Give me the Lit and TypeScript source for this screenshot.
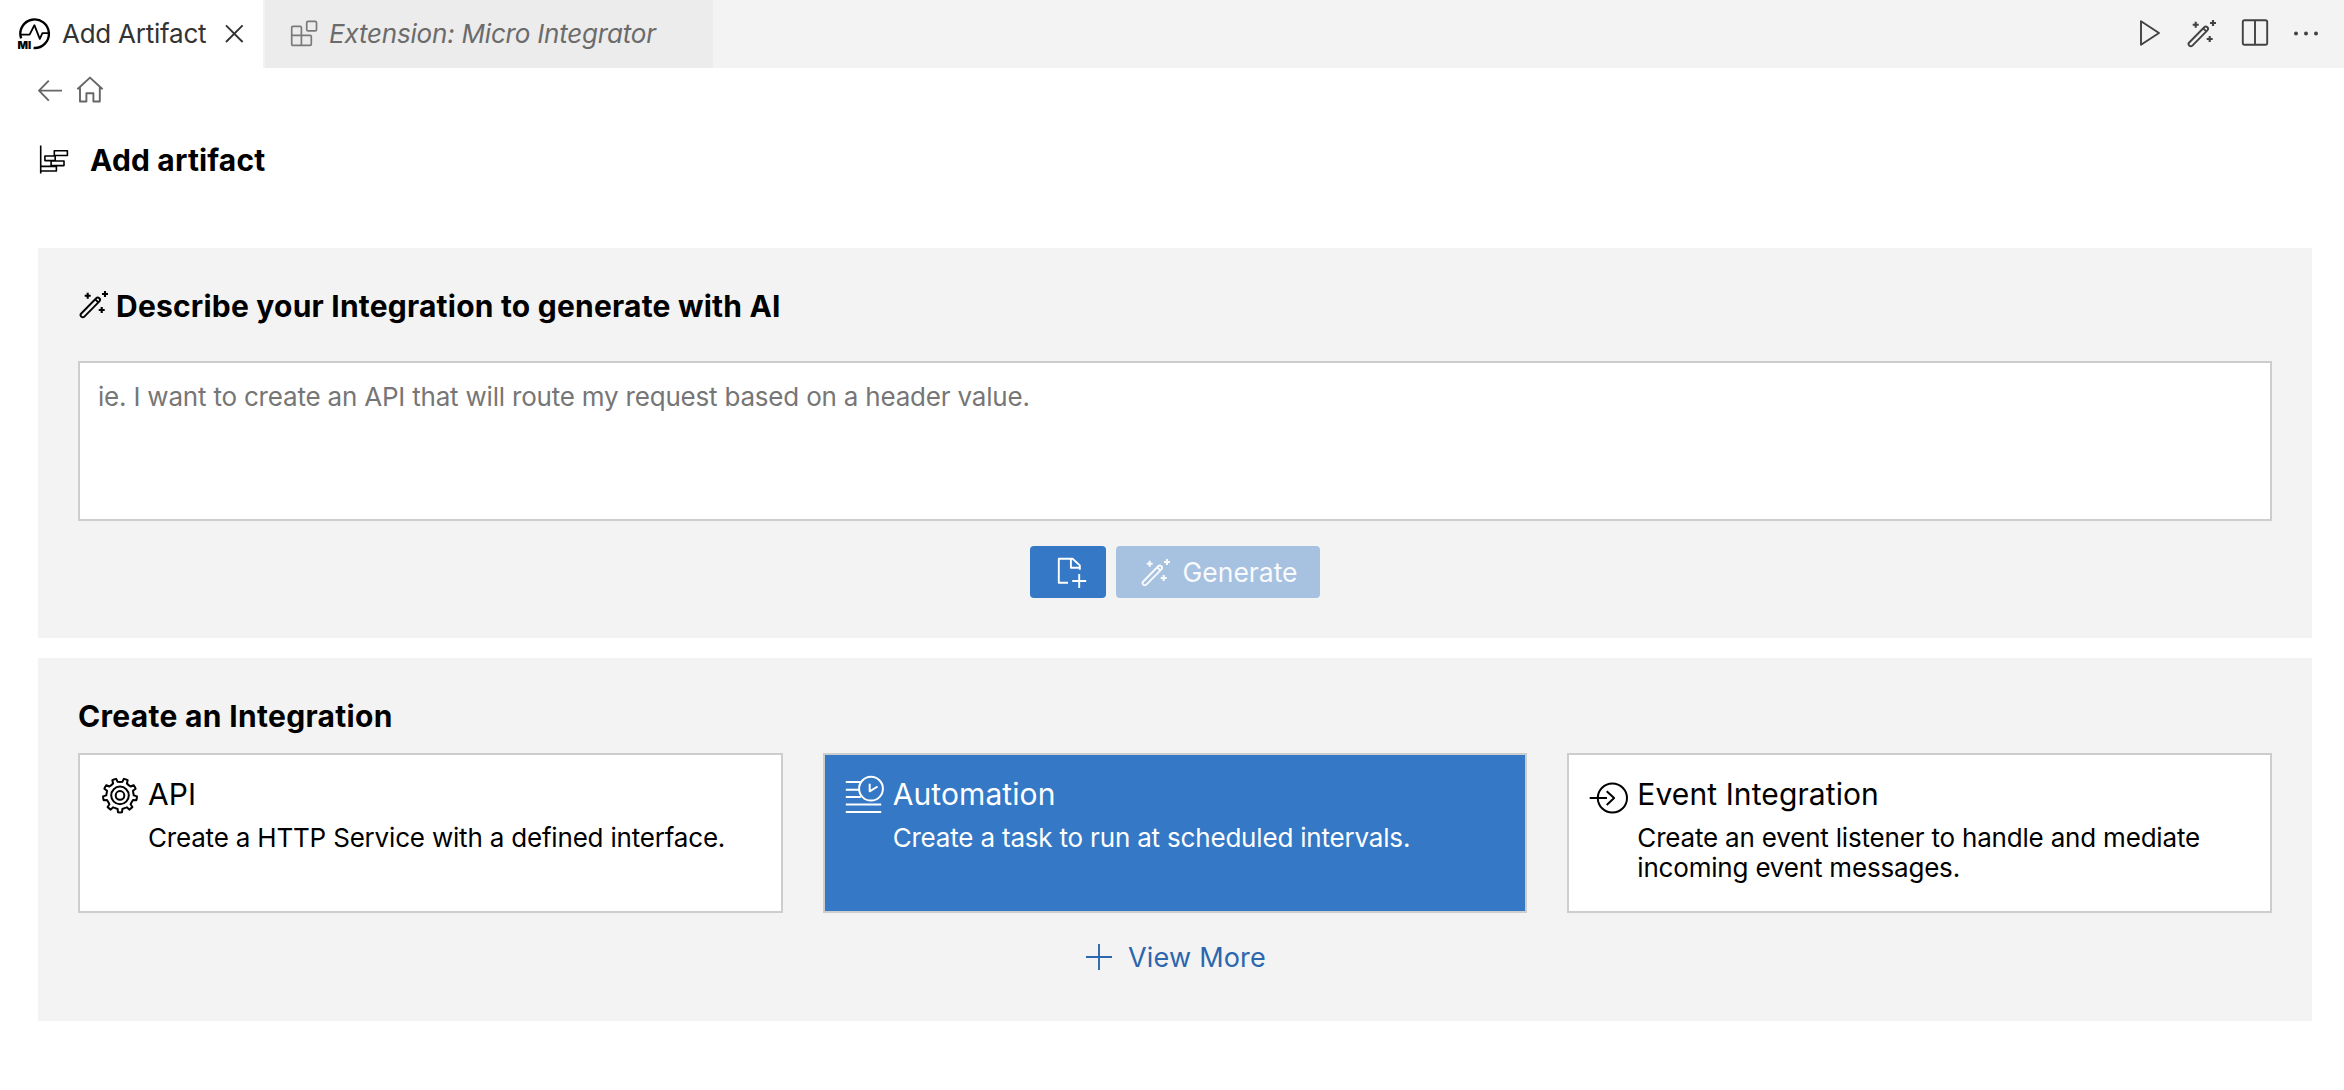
import { LitElement, html, css, svg, type TemplateResult } from "lit";
import { customElement, property } from "lit/decorators.js";

const gearPath = (cx: number, cy: number, outer: number, root: number, teeth: number): string => {
  const step = (Math.PI * 2) / teeth;
  const at = (r: number, a: number) =>
    `${(cx + r * Math.cos(a)).toFixed(2)} ${(cy + r * Math.sin(a)).toFixed(2)}`;
  let d = "";
  for (let i = 0; i < teeth; i++) {
    const a = Math.PI / 2 + i * step;
    d += `${i === 0 ? "M" : "L"}${at(root, a - step * 0.25)}`;
    d += `L${at(outer, a - step * 0.17)}`;
    d += `A${outer} ${outer} 0 0 1 ${at(outer, a + step * 0.17)}`;
    d += `L${at(root, a + step * 0.25)}`;
    d += `Q${at(root - 0.4, a + step * 0.5)} ${at(root, a + step * 0.75)}`;
  }
  return d + "Z";
};

type IconDef = { w: number; h: number; stroke: number; body: TemplateResult };

const ICONS: Record<string, IconDef> = {
  mi: {
    w: 34, h: 34, stroke: 2.4,
    body: svg`
      <path d="M3.1 21.4A14.3 14.3 0 1 1 15.6 31"/>
      <path d="M3 17.6H11.6L16.4 8.2L21.8 21.8L24.4 16.2H31" stroke-width="1.8"/>
      <text class="mi" x="-0.6" y="32" stroke="none" fill="currentColor">MI</text>`,
  },
  close: { w: 20, h: 20, stroke: 1.9, body: svg`<path d="M1 1.4L17.6 18M17.6 1.4L1 18"/>` },
  extensions: {
    w: 28, h: 28, stroke: 1.7,
    body: svg`
      <path d="M2.9 6.3H10.2Q11.4 6.3 11.4 7.5V15.3H20.2Q21.3 15.3 21.3 16.4V24.3Q21.3 25.4 20.2 25.4H2.9Q1.7 25.4 1.7 24.3V7.4Q1.7 6.3 2.9 6.3ZM1.7 15.3H11.4V25.4"/>
      <rect x="16.7" y="1.3" width="9.8" height="9.6" rx="1.4"/>`,
  },
  play: { w: 24, h: 28, stroke: 1.9, body: svg`<path d="M3 2.2L21 14L3 25.8Z"/>` },
  wand: {
    w: 30, h: 30, stroke: 1.9,
    body: svg`
      <rect x="-0.6" y="16.2" width="25.8" height="4.4" rx="2.2" transform="rotate(-45.5 12.3 18.4)"/>
      <path d="M17.2 10.3L20.3 13.4"/>
      <path d="M9.7 3.7V9.7M6.7 6.7H12.7M27 2V8M24 5H30M23.7 18V24M20.7 21H26.7" stroke-width="2.1"/>`,
  },
  split: {
    w: 30, h: 30, stroke: 1.9,
    body: svg`<rect x="2.8" y="2.3" width="24.4" height="24.4" rx="1.8"/><path d="M15 2.3V26.7"/>`,
  },
  dots: {
    w: 28, h: 28, stroke: 0,
    body: svg`<g fill="currentColor"><circle cx="4" cy="14.4" r="2"/><circle cx="14" cy="14.4" r="2"/><circle cx="24" cy="14.4" r="2"/></g>`,
  },
  back: { w: 26, h: 24, stroke: 1.9, body: svg`<path d="M24 12.6H1M10.8 2.6L1 12.6L10.8 22.6"/>` },
  home: {
    w: 28, h: 28, stroke: 1.9,
    body: svg`<path d="M0.4 13.2L13 1.6L25.6 13.2M3 11V25.5H9.4V17.2H16.4V25.5H22.8V11"/>`,
  },
  artifact: {
    w: 30, h: 30, stroke: 1.6,
    body: svg`<path d="M1.7 0.6V28.6M15.3 5.7H28.4V10.5H15.3ZM5.9 11H16.2V15.6H5.9ZM12.1 16H25V20.6H12.1ZM1.7 21.4H17.4V26H1.7Z"/>`,
  },
  fileAdd: {
    w: 32, h: 32, stroke: 1.9,
    body: svg`<path d="M12 26.7H2.8V2.7H16.6L23.8 9.4V13.7M14.9 2.7V11.7H23.8M23.2 18V32M16.2 25H30.2"/>`,
  },
  gear: {
    w: 40, h: 40, stroke: 2,
    body: svg`
      <path d=${gearPath(20, 19.4, 17, 13.8, 9)}/>
      <circle cx="20" cy="19.4" r="8.8"/><circle cx="20" cy="19.4" r="4.3"/>`,
  },
  automation: {
    w: 42, h: 42, stroke: 2,
    body: svg`
      <path d="M0.8 6H15.8M0.8 13.7H14M0.8 21H15.8M0.8 28.6H36.2M0.8 36H36.2"/>
      <circle cx="26" cy="12.7" r="11.9"/><path d="M24.7 7.7V15.3L32.6 10.5"/>`,
  },
  event: {
    w: 42, h: 40, stroke: 2,
    body: svg`<circle cx="23.4" cy="22" r="14.6"/><path d="M0.7 22H18M17.7 15.2L25.1 22L17.7 28.9"/>`,
  },
  plus: { w: 26, h: 26, stroke: 1.9, body: svg`<path d="M13 0V26M0 13H26"/>` },
};

@customElement("mi-icon")
class MiIcon extends LitElement {
  @property() name = "";

  static styles = css`
    :host { display: block; flex: none; }
    .glyph { display: block; overflow: visible; }
    .mi { font: 900 11px Inter, "Liberation Sans", sans-serif; letter-spacing: 0; }
  `;

  render() {
    const icon = ICONS[this.name];
    return html`<svg class="glyph" width=${icon.w} height=${icon.h} viewBox="0 0 ${icon.w} ${icon.h}"
      fill="none" stroke="currentColor" stroke-width=${icon.stroke} stroke-linejoin="round">${icon.body}</svg>`;
  }
}

@customElement("integration-card")
class IntegrationCard extends LitElement {
  @property() icon = "";
  @property() heading = "";
  @property() description = "";

  static styles = css`
    :host {
      display: flex; box-sizing: border-box; height: 160px; min-width: 0;
      border: 2px solid #cdcdcd; background: #fff; color: #000;
      padding: 21px 20px 0 20px; gap: 8px;
    }
    :host([active]) { background: #3478c6; color: #fff; }
    .icon { width: 40px; flex: none; }
    .heading { margin: 0; font-size: 30px; font-weight: 400; line-height: 36px; letter-spacing: 0.1px; }
    .description { margin: 11px 0 0; font-size: 26px; line-height: 30px; letter-spacing: -0.19px; }
  `;

  render() {
    return html`
      <div class="icon"><mi-icon name=${this.icon}></mi-icon></div>
      <div>
        <h3 class="heading">${this.heading}</h3>
        <p class="description">${this.description}</p>
      </div>`;
  }
}

@customElement("app-root")
class AppRoot extends LitElement {
  static styles = css`
    :host {
      display: block; height: 1090px; overflow: hidden; background: #fff; color: #000;
      font-family: Inter, "Liberation Sans", sans-serif;
    }
    .tabs { display: flex; height: 68px; background: #f3f3f3; }
    .tab { display: flex; align-items: center; box-sizing: border-box; font-size: 26px; line-height: 68px; white-space: nowrap; }
    .tab-label { height: 68px; }
    .tab-active { width: 265px; border-right: 2px solid #f3f3f3; padding-left: 18px; background: #fff; color: #333; letter-spacing: -0.245px; }
    .tab-active .tab-label { padding: 0 19px 0 10px; }
    .logo { color: #000; }
    .tab-preview { width: 448px; padding-left: 25px; background: #ececec; color: #6b6b6b; font-style: italic; letter-spacing: -0.2px; }
    .tab-preview .tab-label { padding-left: 11px; }
    .preview-icon { color: #7a7a7a; }
    .actions { display: flex; align-items: center; gap: 24px; margin-left: auto; padding: 0 24px 2px 0; color: #424242; }
    .more { margin-left: -2px; }
    .nav { display: flex; align-items: center; gap: 13px; padding: 8px 0 0 38px; height: 28px; color: #666; }
    .title-row { display: flex; align-items: center; gap: 21px; padding: 38px 0 0 39px; }
    .title { margin: 0; font-size: 30px; line-height: 36px; font-weight: 700; letter-spacing: 0.17px; }
    .content { display: flex; flex-direction: column; gap: 20px; padding: 70px 32px 0 38px; }
    .panel { background: #f3f3f3; padding: 40px; }
    .panel-heading { display: flex; align-items: center; gap: 8px; margin: 0; font-size: 30px; line-height: 36px; font-weight: 700; }
    .ai-heading { letter-spacing: 0.21px; }
    .create-heading { letter-spacing: 0.31px; }
    .ai-icon { padding-bottom: 4px; }
    .prompt {
      display: block; box-sizing: border-box; width: 100%; height: 160px; margin: 37px 0 0; padding: 18px 17px 16px 18px;
      border: 2px solid #cdcdcd; border-radius: 0; background: #fff; resize: none; outline: none;
      font: 26px/32px Inter, "Liberation Sans", sans-serif; letter-spacing: -0.2px;
    }
    .prompt::placeholder { color: #767676; opacity: 1; }
    .buttons { display: flex; justify-content: center; gap: 10px; margin-top: 25px; }
    .button {
      display: flex; align-items: center; box-sizing: border-box; height: 52px; border: 0; border-radius: 4px;
      margin: 0; padding: 0; background: #3478c6; color: #fff; font: 26.5px/52px Inter, "Liberation Sans", sans-serif;
    }
    .attach { width: 76px; padding-left: 25.5px; }
    .generate { width: 204px; padding-left: 23.5px; gap: 13px; background: #a7c1e1; color: #f9fafc; }
    .cards { display: grid; grid-template-columns: repeat(3, 1fr); gap: 40px; margin-top: 19px; }
    .view-more {
      display: flex; align-items: center; justify-content: center; gap: 16px; margin: 25px 0 3px; padding-left: 2px;
      font-size: 27px; line-height: 40px; letter-spacing: 0.2px; color: #2b66ae;
    }
    .view-more-icon { padding-bottom: 3px; }
  `;

  render() {
    return html`
      <header class="tabs">
        <div class="tab tab-active">
          <mi-icon class="logo" name="mi"></mi-icon>
          <span class="tab-label">Add Artifact</span>
          <mi-icon name="close"></mi-icon>
        </div>
        <div class="tab tab-preview">
          <mi-icon class="preview-icon" name="extensions"></mi-icon>
          <span class="tab-label">Extension: Micro Integrator</span>
        </div>
        <div class="actions">
          <mi-icon name="play"></mi-icon>
          <mi-icon name="wand"></mi-icon>
          <mi-icon name="split"></mi-icon>
          <mi-icon class="more" name="dots"></mi-icon>
        </div>
      </header>
      <nav class="nav">
        <mi-icon name="back"></mi-icon>
        <mi-icon name="home"></mi-icon>
      </nav>
      <div class="title-row">
        <mi-icon name="artifact"></mi-icon>
        <h1 class="title">Add artifact</h1>
      </div>
      <main class="content">
        <section class="panel">
          <h2 class="panel-heading ai-heading">
            <mi-icon class="ai-icon" name="wand"></mi-icon>
            <span>Describe your Integration to generate with AI</span>
          </h2>
          <textarea class="prompt"
            placeholder="ie. I want to create an API that will route my request based on a header value."></textarea>
          <div class="buttons">
            <button class="button attach"><mi-icon name="fileAdd"></mi-icon></button>
            <button class="button generate"><mi-icon name="wand"></mi-icon><span>Generate</span></button>
          </div>
        </section>
        <section class="panel">
          <h2 class="panel-heading create-heading">Create an Integration</h2>
          <div class="cards">
            <integration-card icon="gear" heading="API"
              description="Create a HTTP Service with a defined interface."></integration-card>
            <integration-card active icon="automation" heading="Automation"
              description="Create a task to run at scheduled intervals."></integration-card>
            <integration-card icon="event" heading="Event Integration"
              description="Create an event listener to handle and mediate incoming event messages."></integration-card>
          </div>
          <div class="view-more">
            <mi-icon class="view-more-icon" name="plus"></mi-icon>
            <span>View More</span>
          </div>
        </section>
      </main>`;
  }
}
